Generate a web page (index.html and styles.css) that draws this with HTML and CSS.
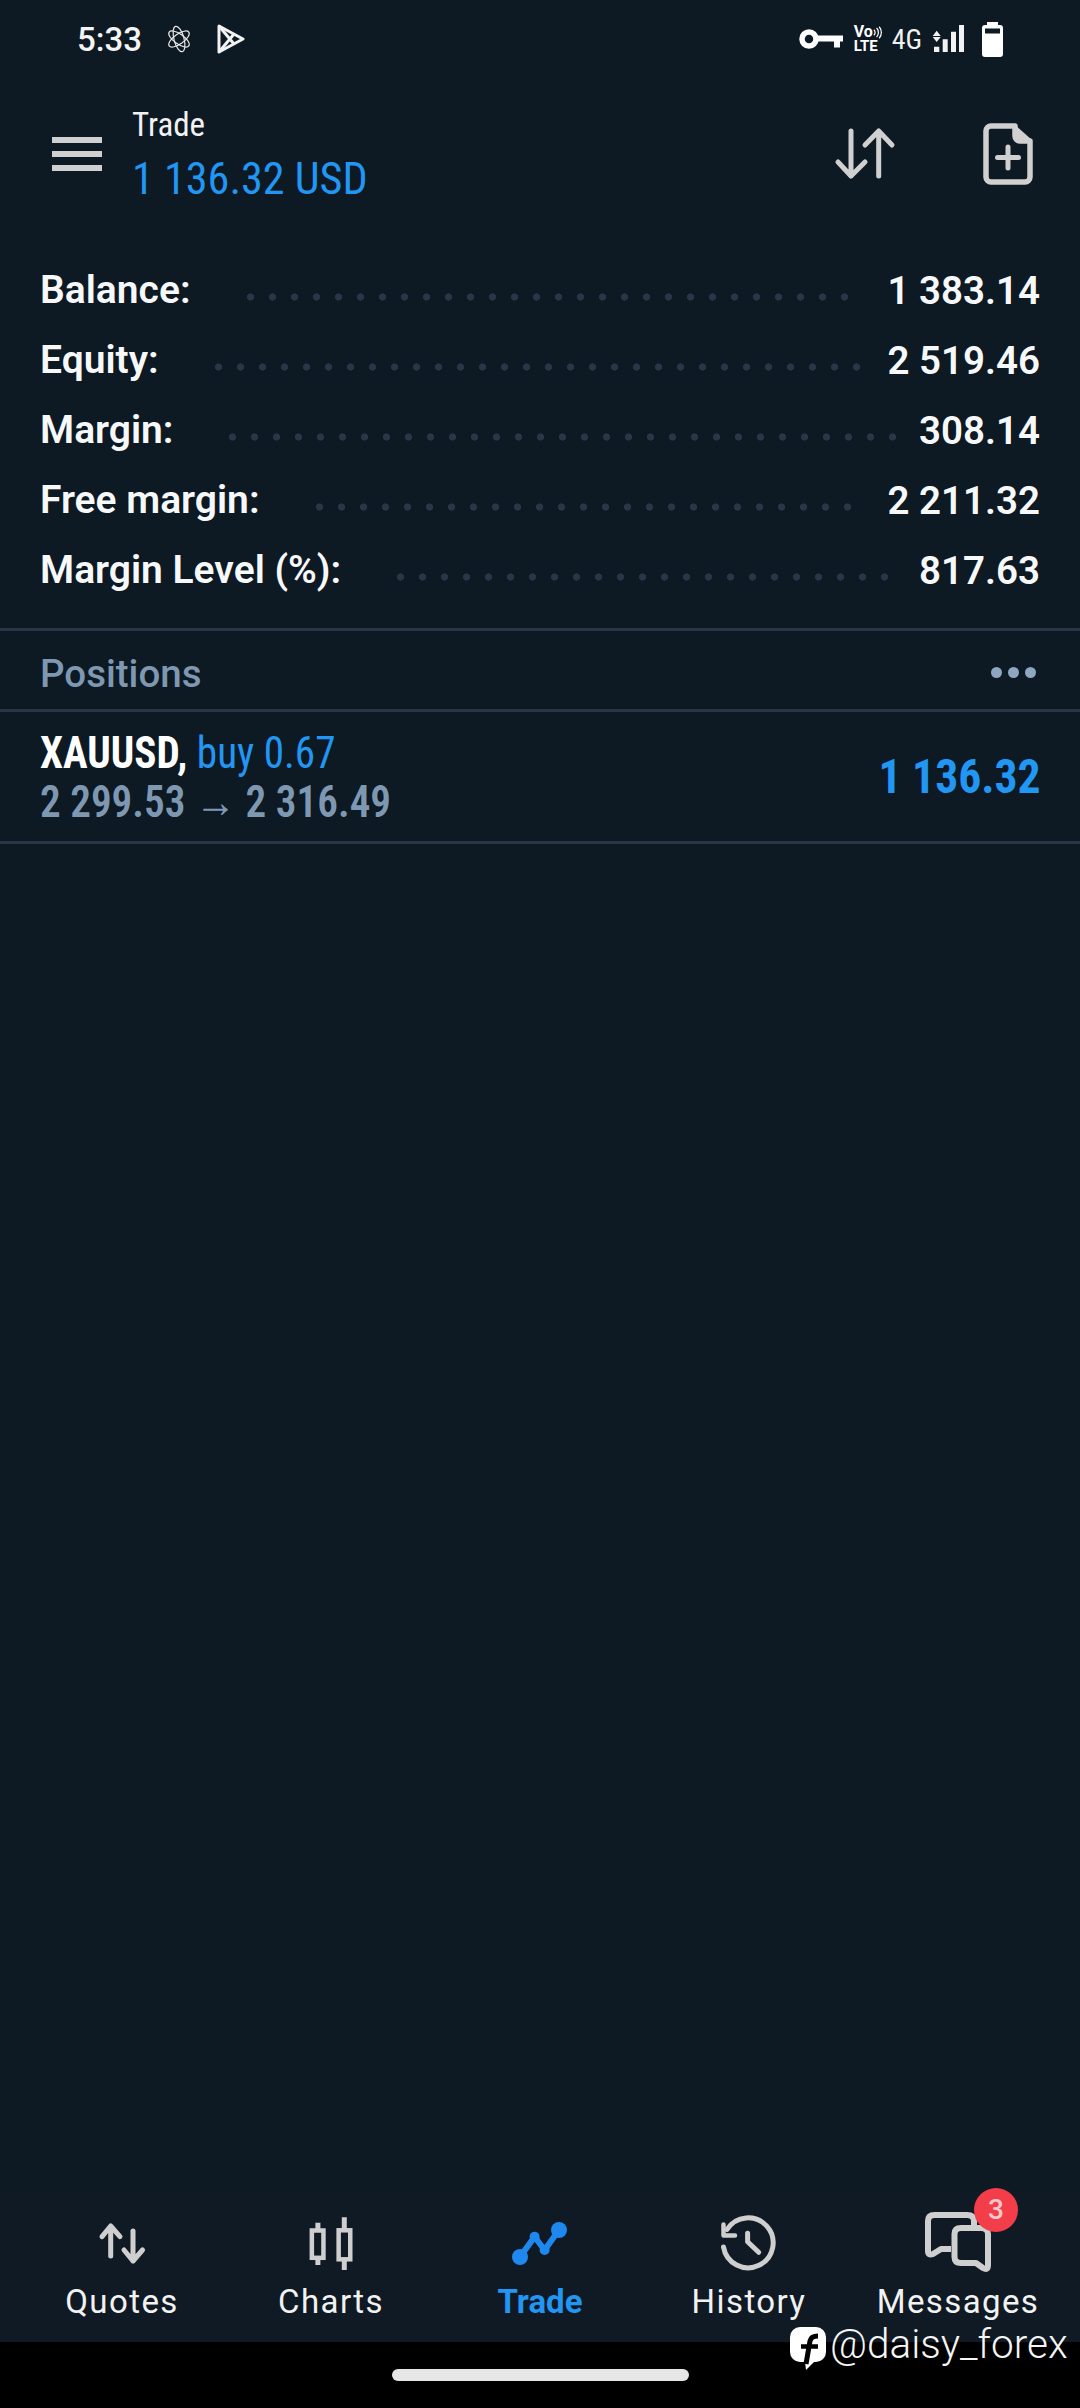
FILE: index.html
```html
<!DOCTYPE html>
<html lang="en">
<head>
<meta charset="utf-8">
<title>Trade</title>
<link rel="stylesheet" href="styles.css">
</head>
<body>
<div class="phone">
  <div class="status">
    <span class="clock">5:33</span>
    <svg class="st-atom" viewBox="0 0 24 28" fill="none" stroke="#e8e8e8" stroke-width="1.2"><ellipse cx="12" cy="14" rx="5" ry="13" transform="rotate(-15 12 14)"/><ellipse cx="12" cy="14" rx="12" ry="5" transform="rotate(35 12 14)"/><ellipse cx="12" cy="14" rx="12" ry="5" transform="rotate(-35 12 14)"/></svg>
    <svg class="st-play" viewBox="0 0 28 30" fill="none" stroke="#f2f2f2" stroke-width="3" stroke-linejoin="round"><path d="M2 2 L26 15 L2 28 Z"/><path d="M2 2 L17 20 M2 28 L17 10"/></svg>
    <span class="st-right">
      <svg class="st-key" viewBox="0 0 44 20"><circle cx="10" cy="10" r="7" fill="none" stroke="#fff" stroke-width="5.5"/><path d="M16 6.500h28v6h-3v6h-6v-6H16z" fill="#fff"/></svg>
      <span class="volte"><span class="vo">Vo<svg class="vo-wave" viewBox="0 0 10 14" fill="none" stroke="#fff" stroke-width="1.4"><path d="M1 4a4 4 0 0 1 0 6M4 2a7 7 0 0 1 0 10M7 0.500a10 10 0 0 1 0 13"/></svg></span><span class="lte">LTE</span></span>
      <span class="fourg">4G</span>
      <svg class="st-signal" viewBox="0 0 33 30" fill="#f2f2f2"><path d="M4.700 6.700L8.700 12H.7zM.7 13h8l-4 5zM2 22.700h5.300V28H2zM10.700 15.300h5V28h-5zM19 7.700h5V28h-5zM27 1h5v27h-5z"/></svg>
      <svg class="st-batt" viewBox="0 0 21 35"><path d="M5 0h11v3h2a3 3 0 0 1 3 3v26a3 3 0 0 1-3 3H3a3 3 0 0 1-3-3V6a3 3 0 0 1 3-3h2z" fill="#fff"/><rect x="3" y="6.500" width="15" height="5" fill="#0d1923"/></svg>
    </span>
  </div>

  <header class="topbar">
    <div class="burger"><i></i><i></i><i></i></div>
    <div class="title">
      <div class="t-small cond">Trade</div>
      <div class="t-big cond">1 136.32 USD</div>
    </div>
    <svg class="ic-sort" viewBox="0 0 70 60" fill="none" stroke="#d0d0d0" stroke-width="5" stroke-linecap="round" stroke-linejoin="round"><path d="M21 7v45M8 38l13 14 14-14"/><path d="M48.700 52V7M35 21L48.700 7 62 21"/></svg>
    <svg class="ic-doc" viewBox="0 0 50 62" fill="none"><path d="M8 3h24v10a5 5 0 0 0 5 5h10v36a5 5 0 0 1-5 5H8a5 5 0 0 1-5-5V8a5 5 0 0 1 5-5z" stroke="#d0d0d0" stroke-width="5.500" stroke-linejoin="round"/><path d="M31 1l18 16-13 1a5 5 0 0 1-5-5z" fill="#d0d0d0"/><path d="M25 24v21M14.500 34.500h21" stroke="#d0d0d0" stroke-width="5" stroke-linecap="round"/></svg>
  </header>

  <section class="summary">
    <div class="row"><span class="lbl">Balance:</span><span class="dots" style="--n:28"></span><span class="val">1 383.14</span></div>
    <div class="row"><span class="lbl">Equity:</span><span class="dots" style="--n:30"></span><span class="val">2 519.46</span></div>
    <div class="row"><span class="lbl">Margin:</span><span class="dots" style="--n:31"></span><span class="val">308.14</span></div>
    <div class="row"><span class="lbl">Free margin:</span><span class="dots" style="--n:25"></span><span class="val">2 211.32</span></div>
    <div class="row"><span class="lbl">Margin Level (%):</span><span class="dots" style="--n:23"></span><span class="val">817.63</span></div>
  </section>

  <div class="sect-head">
    <span class="sect-title">Positions</span>
    <span class="more"><i></i><i></i><i></i></span>
  </div>

  <div class="position">
    <div class="pos-left">
      <div class="pos-l1 cond"><b>XAUUSD,</b> <span class="blue">buy 0.67</span></div>
      <div class="pos-l2 cond">2 299.53 → 2 316.49</div>
    </div>
    <div class="pos-val cond">1 136.32</div>
  </div>

  <div class="spacer"></div>

  <nav class="tabs">
    <div class="tab">
      <svg viewBox="0 0 70 70" fill="none" stroke="#cfcfcf" stroke-width="5" stroke-linecap="round" stroke-linejoin="round"><path d="M23.700 26v30M15 36.700L23.700 26 33 36.700"/><path d="M46 31v30M37 50l9 11 9.500-11"/></svg>
      <span>Quotes</span>
    </div>
    <div class="tab">
      <svg viewBox="0 0 70 70" fill="none" stroke="#cfcfcf" stroke-width="5"><path d="M21.900 22.700V30M21.900 58v7M48.300 17.300V30M48.300 60v10"/><rect x="15.850" y="30.500" width="11.600" height="27.300" stroke-width="4.500"/><rect x="42.650" y="30.300" width="11.600" height="29" stroke-width="4.500"/></svg>
      <span>Charts</span>
    </div>
    <div class="tab active">
      <svg viewBox="0 0 70 70" fill="none" stroke="#1e88ee" stroke-width="6" stroke-linecap="round" stroke-linejoin="round"><path d="M15 57L29.600 36.700 39.600 50 54 30"/><circle cx="15" cy="57" r="8" fill="#1e88ee" stroke="none"/><circle cx="29.600" cy="36.700" r="5" fill="#1e88ee" stroke="none"/><circle cx="39.600" cy="50" r="5" fill="#1e88ee" stroke="none"/><circle cx="54" cy="30" r="8" fill="#1e88ee" stroke="none"/></svg>
      <span>Trade</span>
    </div>
    <div class="tab">
      <svg viewBox="0 0 70 70" fill="none" stroke="#cfcfcf" stroke-width="5" stroke-linecap="round" stroke-linejoin="round"><path d="M9.500 47A25 25 0 1 0 13 29.500"/><path d="M9.500 24.500V35.500H21" stroke-width="4.500"/><path d="M33.600 33.300v8.400L44.700 52.300"/></svg>
      <span>History</span>
    </div>
    <div class="tab">
      <span class="badge">3</span>
      <svg viewBox="0 0 70 70" fill="none" stroke="#cfcfcf" stroke-width="6" stroke-linejoin="round"><path d="M28 49H18L10 54Q5 56 5 51V21Q5 15 11.500 15H44Q51 15 51 21V27"/><path d="M38 28H58Q65 28 65 34V65Q65 71 60 68L53 63H38Q31.500 63 31.500 57V34Q31.500 28 38 28Z"/></svg>
      <span>Messages</span>
    </div>
  </nav>

  <div class="navbar"><span class="pill"></span></div>

  <div class="watermark">
    <svg viewBox="0 0 36 44"><path d="M10 0h16a10 10 0 0 1 10 10v15a10 10 0 0 1-10 10h-2l-8 8-1-8h-5a10 10 0 0 1-10-10V10A10 10 0 0 1 10 0z" fill="#fff"/><path d="M16 37L20 14Q21 9 28 9" fill="none" stroke="#000" stroke-width="5"/><path d="M11 19.500h17" stroke="#000" stroke-width="4.500"/></svg>
    <span class="wm-text">@daisy_forex</span>
  </div>
</div>
</body>
</html>
```
FILE: styles.css
```css
* { box-sizing: border-box; }
html, body { margin: 0; padding: 0; background: #0d1923; }
body { font-family: Roboto, "Liberation Sans", sans-serif; color: #fff; }
.phone { position: relative; width: 1080px; height: 2408px; display: flex; flex-direction: column; background: #0d1923; overflow: hidden; }
.cond { font-stretch: 75%; }

.status { height: 76px; padding: 2px 77px 0 77px; display: flex; align-items: center; }
.clock { font-size: 33px; font-weight: 500; color: #f4f4f4; }
.st-atom { width: 24px; height: 28px; margin-left: 25px; }
.st-play { width: 28px; height: 30px; margin-left: 26px; }
.st-right { margin-left: auto; display: flex; align-items: center; }
.st-key { width: 44px; height: 20px; }
.volte { display: flex; flex-direction: column; margin-left: 11px; width: 28px; font-weight: 700; line-height: 14px; }
.vo { font-size: 16px; display: flex; align-items: center; }
.vo-wave { width: 9px; height: 13px; }
.lte { font-size: 15px; }
.fourg { margin-left: 10px; font-size: 28px; font-stretch: 75%; color: #f0f0f0; }
.st-signal { width: 33px; height: 30px; margin-left: 10px; }
.st-batt { width: 21px; height: 35px; margin-left: 17px; }

.topbar { height: 156px; display: flex; align-items: center; padding: 0 47px 0 52px; }
.burger { width: 50px; display: flex; flex-direction: column; gap: 8px; }
.burger i { display: block; height: 6px; background: #d0d0d0; }
.title { margin-left: 30px; }
.t-small { font-size: 33px; line-height: 50px; color: #f2f2f2; }
.t-big { font-size: 44.200px; line-height: 59px; color: #2196f3; }
.ic-sort { width: 70px; height: 60px; margin-left: auto; }
.ic-doc { width: 50px; height: 62px; margin-left: 83px; }

.summary { padding: 23px 40px 0 40px; height: 396px; }
.row { height: 70px; display: flex; align-items: center; font-weight: 600; }
.lbl { font-size: 39px; white-space: nowrap; color: #f7f8f9; }
.val { font-size: 38.500px; margin-left: auto; white-space: nowrap; color: #f7f8f9; }
.dots { flex: none; width: calc(var(--n) * 22px - 15px); height: 14px; margin: 14px 0 0 56px; background-image: radial-gradient(circle at 3.500px 7px, #2a3648 3.300px, transparent 3.900px); background-size: 22px 14px; background-repeat: repeat-x; }

.sect-head { height: 84px; border-top: 3px solid #2a3648; border-bottom: 3px solid #2a3648; display: flex; align-items: center; justify-content: space-between; padding: 0 44px 0 40px; }
.sect-title { margin-top: 7px; font-size: 38.500px; font-weight: 500; color: #7f98b2; }
.more { display: flex; gap: 6px; margin-top: 4px; }
.more i { width: 11px; height: 11px; border-radius: 50%; background: #8ea6c0; }

.position { height: 132px; border-bottom: 3px solid #2a3648; display: flex; align-items: center; justify-content: space-between; padding: 0 39px 0 40px; }
.pos-left { transform: scaleX(0.915); transform-origin: left center; }
.pos-l1 { font-size: 45px; line-height: 49px; white-space: nowrap; }
.pos-l1 b { font-weight: 700; }
.blue { color: #2196f3; }
.pos-l2 { font-size: 45px; line-height: 49px; font-weight: 600; color: #7f98b2; white-space: nowrap; }
.pos-val { font-size: 48px; font-weight: 700; color: #2196f3; transform: scaleX(0.95); transform-origin: right center; }

.spacer { flex: 1; }

.tabs { height: 150px; background: #0f1a24; display: flex; padding: 0 17.500px; }
.tab { position: relative; flex: 1; display: flex; flex-direction: column; align-items: center; font-size: 33px; letter-spacing: 1.400px; color: #f2f2f2; }
.tab svg { width: 70px; height: 70px; margin-top: 8px; overflow: visible; }
.tab span { line-height: 40px; margin-top: 11.700px; }
.tab.active { color: #2196f3; font-weight: 700; letter-spacing: 0; }
.tab .badge { position: absolute; left: 120.500px; top: -4px; width: 44px; height: 44px; margin-top: 0; border-radius: 50%; background: #f33e4a; color: #ffc9cd; font-size: 28px; font-weight: 500; line-height: 44px; text-align: center; letter-spacing: 0; }

.navbar { height: 66px; background: #000; display: flex; justify-content: center; padding-top: 27px; }
.pill { width: 297px; height: 12px; border-radius: 6px; background: #e6e6e6; }

.watermark { position: absolute; left: 790px; top: 2327px; display: flex; align-items: flex-start; gap: 4px; font-weight: 300; color: #f5f5f5; }
.watermark svg { width: 36px; height: 44px; }
.wm-text { font-size: 40.500px; line-height: 44px; margin-top: -5px; }
```
